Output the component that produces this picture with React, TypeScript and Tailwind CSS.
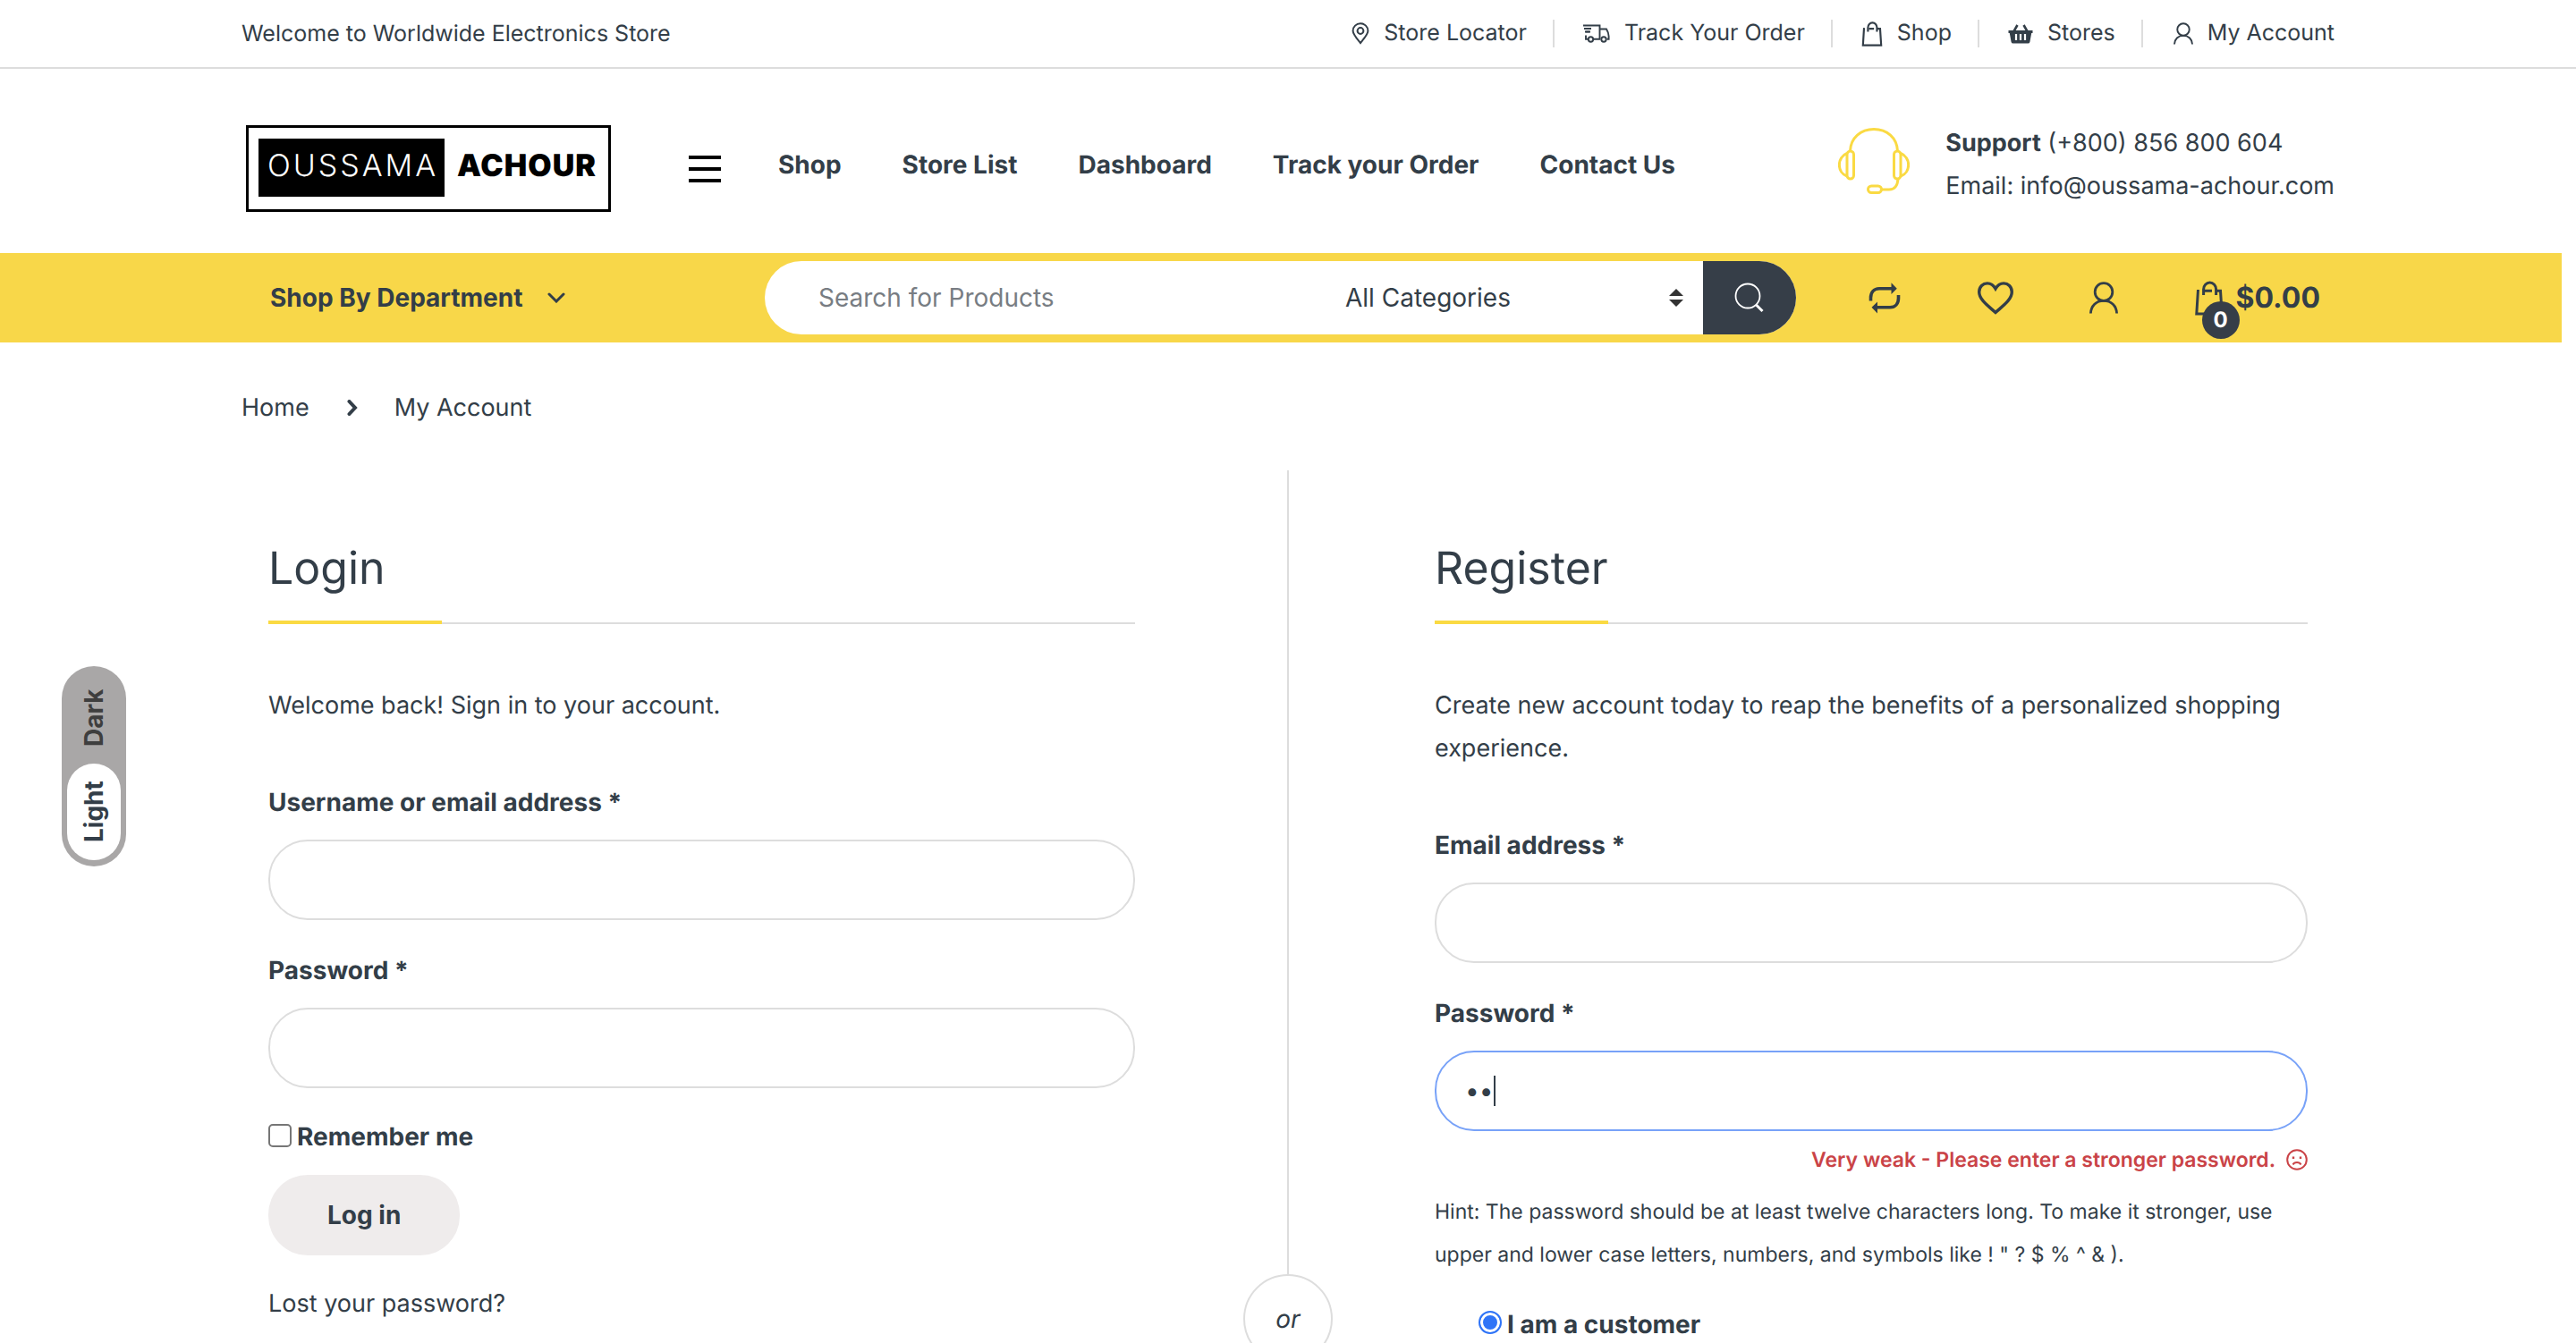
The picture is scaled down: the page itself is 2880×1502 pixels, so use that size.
import type { ReactNode } from "react";

function PinIcon() {
  return (
    <svg aria-hidden="true" className="h-[25px] w-[20px]" viewBox="0 0 20 25" fill="none" stroke="currentColor" strokeWidth="2">
      <path d="M10 23.2C5 16.8 1.6 13 1.6 9.4a8.4 8.2 0 0 1 16.8 0c0 3.600-3.400 7.400-8.400 13.800z" />
      <circle cx="10" cy="9.500" r="3.400" />
    </svg>
  );
}

function TruckIcon() {
  return (
    <svg aria-hidden="true" className="h-[21px] w-[30px]" viewBox="0 0 30 21" fill="none" stroke="currentColor" strokeWidth="1.900">
      <path d="M0 1.500h18.500v15M1 5h8M2.500 8.500h5M3 12.500v4.200h2.200M11.800 16.700h7.500M18.500 5.500h7.500c1.800 3 2.600 5.500 2.600 8v3.200h-2" />
      <circle cx="8.500" cy="17" r="2.700" />
      <circle cx="23" cy="17" r="2.700" />
      <path d="M2 8.500h6" />
    </svg>
  );
}

function BagIcon({ className }: { className: string }) {
  return (
    <svg aria-hidden="true" className={className} viewBox="0 0 32 39" fill="none" stroke="currentColor" strokeWidth="3">
      <path d="M3.500 10 1.800 37h28.400L28.500 11.300h-5.200M11 11.300h8" />
      <path d="M9.600 16V9.500a7 7.500 0 0 1 14 0V16" />
    </svg>
  );
}

function BasketIcon() {
  return (
    <svg aria-hidden="true" className="h-[22px] w-[28px]" viewBox="0 0 28 22">
      <path d="M10.500 1 6.500 8M17.500 1l4 7" stroke="currentColor" strokeWidth="2.600" fill="none" />
      <path d="M0.500 7h27v3h-1.300l-1.800 10q-.4 1.500-2 1.500H5.600q-1.600 0-2-1.500L1.800 10H.5z" fill="currentColor" />
      <path d="M9 11v7M14 11v7M19 11v7" stroke="#fff" strokeWidth="2.200" />
    </svg>
  );
}

function UserIcon({ className, stroke }: { className: string; stroke: number }) {
  return (
    <svg aria-hidden="true" className={className} viewBox="0 0 32 36" fill="none" stroke="currentColor" strokeWidth={stroke}>
      <circle cx="16" cy="11.500" r="9.800" />
      <path d="M1.400 35.500C1.800 27 7.500 21.400 16 21.400S30.200 27 30.600 35.500" />
    </svg>
  );
}

function HeadsetIcon() {
  return (
    <svg aria-hidden="true" className="mb-2 h-[76px] w-[80px] text-[#fada43]" viewBox="0 0 80 76" fill="none" stroke="currentColor" strokeWidth="3">
      <path d="M13.500 27C14 12 25.500 2.500 40 2.500S66 12 66.500 27" />
      <rect x="10" y="27" width="7.500" height="31" rx="3.700" />
      <rect x="62.500" y="27" width="7.500" height="31" rx="3.700" />
      <path d="M10 29.500C-1.500 34-1.500 51 10 55M70 29.500c11.500 4.500 11.500 21.500 0 25.500M67 58c-.5 8-4 12-10 12h-8" />
      <rect x="33.500" y="66" width="15" height="7.500" rx="3.700" />
    </svg>
  );
}

function CompareIcon() {
  return (
    <svg aria-hidden="true" className="h-[35px] w-[36px]" viewBox="0 0 36 35">
      <path d="M2.500 20.500V17C2.500 11 6 6.700 12 6.700h14M33.500 14v3.500c0 6-3.500 10.300-9.500 10.300H10" fill="none" stroke="currentColor" strokeWidth="3.600" />
      <path d="M25.500.300 31.800 6.700l-6.300 6.300zM10 21.500 3.500 27.800 10 34.500z" fill="currentColor" />
    </svg>
  );
}

function HeartIcon() {
  return (
    <svg aria-hidden="true" className="h-[37px] w-[40px]" viewBox="0 0 40 37" fill="none" stroke="currentColor" strokeWidth="3.400">
      <path d="M20 34.500C13 28 1.700 20.500 1.700 11.500 1.700 5.500 6 1.900 10.800 1.900c4 0 7 2.100 9.200 6 2.200-3.900 5.200-6 9.200-6 4.800 0 9.100 3.600 9.100 9.600 0 9-11.300 16.500-18.300 23z" />
    </svg>
  );
}

function SearchIcon() {
  return (
    <svg aria-hidden="true" className="h-[34px] w-[34px]" viewBox="0 0 34 34" fill="none" stroke="currentColor">
      <circle cx="15" cy="15" r="13.500" strokeWidth="1.800" />
      <path d="m24.500 25 7 7" strokeWidth="3" />
    </svg>
  );
}

function SadIcon() {
  return (
    <svg aria-hidden="true" className="h-[24px] w-[24px]" viewBox="0 0 24 24" fill="none" stroke="currentColor" strokeWidth="2">
      <circle cx="12" cy="12" r="10.800" />
      <path d="M7.500 17.500c1.500-3.200 7.500-3.200 9 0" />
      <path d="M8 8.500v2.400M16 8.500v2.400" strokeWidth="2.400" />
    </svg>
  );
}

function TopLink({ icon, children, last }: { icon: ReactNode; children: string; last?: boolean }) {
  return (
    <li className={last ? "flex items-center pl-[34px]" : "flex items-center border-r-2 border-[#ddd] pr-[29px] pl-[32px]"}>
      <a href="#" className="flex items-center gap-4">
        {icon}
        {children}
      </a>
    </li>
  );
}

function Heading({ children }: { children: string }) {
  return (
    <h2 className="flex border-b-2 border-[#ddd] text-[50px] leading-[60px]">
      <span className="-mb-[2px] min-w-[194px] border-b-4 border-[#fada43] pb-7">{children}</span>
    </h2>
  );
}

function Field({ id, label, type }: { id: string; label: string; type: string }) {
  return (
    <div className="mb-8">
      <label htmlFor={id} className="mb-[18px] block font-bold">
        {label} *
      </label>
      <input id={id} type={type} className="block h-[90px] w-full rounded-[44px] border-2 border-[#ddd] px-8 outline-none" />
    </div>
  );
}

const navItems = ["Shop", "Store List", "Dashboard", "Track your Order", "Contact Us"];

export default function App() {
  return (
    <div className="relative h-screen overflow-hidden bg-white font-['Inter',sans-serif] text-[28px] leading-[48px] text-[#333e48] [text-rendering:geometricPrecision]">
      <div className="border-b-2 border-[#ddd]">
        <div className="mx-auto flex h-[75px] max-w-[2340px] items-center justify-between text-[25px]">
          <span>Welcome to Worldwide Electronics Store</span>
          <ul className="flex leading-[31px]">
            <TopLink icon={<PinIcon />}>Store Locator</TopLink>
            <TopLink icon={<TruckIcon />}>Track Your Order</TopLink>
            <TopLink icon={<BagIcon className="h-[28px] w-[24px]" />}>Shop</TopLink>
            <TopLink icon={<BasketIcon />}>Stores</TopLink>
            <TopLink icon={<UserIcon className="h-[25px] w-[22px]" stroke={2.8} />} last>My Account</TopLink>
          </ul>
        </div>
      </div>

      <header className="mx-auto flex h-[206px] max-w-[2340px] items-center pt-2">
        <a href="#" className="mt-2 ml-[5px] flex h-[97px] w-[408px] shrink-0 border-[3px] border-black pt-3 pl-[11px] text-[34px] leading-[40px] text-black">
          <span className="flex h-[65px] w-[208px] justify-center bg-black pt-[11px] pl-[3px] font-light tracking-[3px] text-white">OUSSAMA</span>
          <span className="pt-[11px] pl-[14px] font-black tracking-[1px]">ACHOUR</span>
        </a>
        <button type="button" aria-label="Menu" className="mt-[9px] ml-[87px] flex flex-col gap-[9px]">
          <span className="block h-[4px] w-[36px] bg-black" />
          <span className="block h-[4px] w-[36px] bg-black" />
          <span className="block h-[4px] w-[36px] bg-black" />
        </button>
        <nav className="ml-[64px] flex gap-[68px] font-bold">
          {navItems.map((item) => (
            <a key={item} href="#">{item}</a>
          ))}
        </nav>
        <div className="ml-auto flex items-center gap-10">
          <HeadsetIcon />
          <div className="text-[27px]">
            <p><strong>Support</strong> (+800) 856 800 604</p>
            <p>Email: info@oussama-achour.com</p>
          </div>
        </div>
      </header>

      <div className="mr-4 bg-[#f8d749]">
        <div className="ml-[270px] flex h-[100px] max-w-[2340px] items-center">
          <button type="button" className="flex w-1/4 items-center gap-7 pl-8 font-bold">
            Shop By Department
            <svg aria-hidden="true" className="h-[12px] w-[20px]" viewBox="0 0 20 12" fill="none" stroke="currentColor" strokeWidth="3" strokeLinecap="round">
              <path d="m2 2 8 8 8-8" />
            </svg>
          </button>
          <form className="flex h-[82px] flex-1 overflow-hidden rounded-[41px] bg-white">
            <input type="search" aria-label="Search for Products" placeholder="Search for Products" className="min-w-0 flex-1 pl-[60px] outline-none placeholder:text-[#787d83]" />
            <div className="relative flex w-[400px]">
              <select aria-label="Category" className="w-full appearance-none bg-transparent outline-none">
                <option>All Categories</option>
              </select>
              <svg aria-hidden="true" className="pointer-events-none absolute top-[31px] right-[22px] h-[20px] w-[16px] text-[#333]" viewBox="0 0 16 20" fill="currentColor">
                <path d="M0 8 8 0l8 8zM0 12h16l-8 8z" />
              </svg>
            </div>
            <button type="submit" aria-label="Search" className="flex w-[104px] items-center justify-center bg-[#363e48] text-white">
              <SearchIcon />
            </button>
          </form>
          <div className="flex w-[602px] items-center justify-between pr-4 pl-[81px]">
            <a href="#" aria-label="Compare"><CompareIcon /></a>
            <a href="#" aria-label="Wishlist"><HeartIcon /></a>
            <a href="#" aria-label="My Account"><UserIcon className="h-[36px] w-[32px]" stroke={2.8} /></a>
            <a href="#" aria-label="Cart" className="relative flex items-center gap-[14px] text-[32px] font-bold">
              <BagIcon className="h-[39px] w-[32px]" />
              $0.00
              <span className="absolute top-[28px] left-[8px] flex h-[42px] w-[42px] items-center justify-center rounded-full bg-[#363e48] text-[24px] text-white">0</span>
            </a>
          </div>
        </div>
      </div>

      <main className="mx-auto max-w-[2340px]">
        <nav aria-label="Breadcrumb" className="flex items-center pt-[49px] pb-[46px] text-[27px]">
          <a href="#">Home</a>
          <svg aria-hidden="true" className="mr-[41px] ml-[42px] h-[18px] w-[12px]" viewBox="0 0 12 18" fill="none" stroke="currentColor" strokeWidth="4" strokeLinecap="round">
            <path d="m2.500 2 6.500 7-6.500 7" />
          </svg>
          <span>My Account</span>
        </nav>

        <div className="grid grid-cols-[1fr_2px_1fr] items-start">
          <section className="pt-20 pr-[170px] pl-[30px]">
            <Heading>Login</Heading>
            <p className="mt-[67px] mb-[60px] text-[27px]">Welcome back! Sign in to your account.</p>
            <form>
              <Field id="login-user" label="Username or email address" type="text" />
              <Field id="login-password" label="Password" type="password" />
              <label className="-mt-[2px] flex items-center gap-[6px] font-bold">
                <input type="checkbox" className="mb-[2px] h-[26px] w-[26px] appearance-none rounded-[5px] border-2 border-[#767676] bg-white" />
                Remember me
              </label>
              <button type="submit" className="mt-[19px] mb-[30px] block h-[90px] rounded-[44px] bg-[#efecec] px-[66px] font-bold">Log in</button>
              <a href="#" className="block text-[27px]">Lost your password?</a>
            </form>
          </section>

          <div className="flex flex-col items-center">
            <div className="h-[899px] w-[2px] bg-[#ddd]" />
            <span className="flex h-[100px] w-[100px] shrink-0 items-center justify-center rounded-full border-2 border-[#ddd] bg-white italic">or</span>
          </div>

          <section className="pt-20 pr-[30px] pl-[163px]">
            <Heading>Register</Heading>
            <p className="mt-[67px] mb-[60px] text-[27px]">Create new account today to reap the benefits of a personalized shopping experience.</p>
            <form>
              <Field id="register-email" label="Email address" type="email" />
              <label htmlFor="register-password" className="mb-[18px] block font-bold">Password *</label>
              <div className="relative">
                <input id="register-password" type="password" defaultValue="ab" className="block h-[90px] w-full rounded-[44px] border-2 border-[#78a2f8] px-8 caret-transparent outline-none" />
                <span className="absolute top-[28px] left-[66px] h-[34px] w-[2px] bg-[#333e48]" />
              </div>
              <p className="mt-2 flex items-center justify-end gap-[12px] text-[23px] font-semibold text-[#ca4347]">
                Very weak - Please enter a stronger password.
                <SadIcon />
              </p>
              <p className="mt-[10px] text-[23px]">
                Hint: The password should be at least twelve characters long. To make it stronger, use upper and lower case letters, numbers, and symbols like ! " ? $ % ^ &amp; ).
              </p>
              <label className="mt-[30px] ml-[49px] flex items-center gap-[6px] font-bold">
                <input type="radio" name="role" defaultChecked className="mb-1 h-[26px] w-[26px] appearance-none rounded-full border-2 border-[#2f74f7] bg-[#2f74f7] shadow-[inset_0_0_0_3px_#fff]" />
                I am a customer
              </label>
            </form>
          </section>
        </div>
      </main>

      <div className="absolute top-[745px] left-[69px] flex h-[224px] w-[72px] flex-col items-center rounded-full bg-[#a9a7a7] font-bold">
        <button type="button" className="flex h-[109px] w-[60px] rotate-180 items-center justify-center pb-[6px] text-[#3e3e3e] [writing-mode:vertical-rl]">Dark</button>
        <button type="button" className="flex h-[108px] w-[60px] rotate-180 items-center justify-center rounded-full bg-white [writing-mode:vertical-rl]">Light</button>
      </div>
    </div>
  );
}
